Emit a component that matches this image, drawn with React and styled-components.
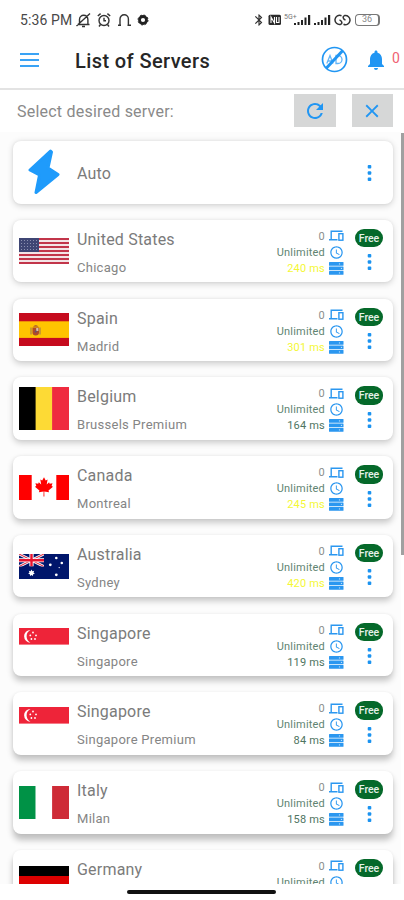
import React from 'react'
import styled, { createGlobalStyle } from 'styled-components'
import { MdAccessTime, MdRefresh, MdClose, MdNotifications, MdBluetooth } from 'react-icons/md'


const servers = [
    { id: 1, flag: 'us', country: 'United States', city: 'Chicago', ping: 240 },
    { id: 2, flag: 'es', country: 'Spain', city: 'Madrid', ping: 301 },
    { id: 3, flag: 'be', country: 'Belgium', city: 'Brussels Premium', ping: 164 },
    { id: 4, flag: 'ca', country: 'Canada', city: 'Montreal', ping: 245 },
    { id: 5, flag: 'au', country: 'Australia', city: 'Sydney', ping: 420 },
    { id: 6, flag: 'sg', country: 'Singapore', city: 'Singapore', ping: 119 },
    { id: 7, flag: 'sg', country: 'Singapore', city: 'Singapore Premium', ping: 84 },
    { id: 8, flag: 'it', country: 'Italy', city: 'Milan', ping: 158 },
    { id: 9, flag: 'de', country: 'Germany' },
]

const UsFlag = () => (
    <svg width="50" height="26" viewBox="0 0 50 26">
        <rect width="50" height="26" fill="#f3e4e6" />
        {[0, 2, 4, 6, 8, 10, 12].map((i) => (
            <rect key={i} y={i * 2} width="50" height="2" fill="#c2354a" />
        ))}
        <rect width="20" height="14" fill="#3f4674" />
        {[2, 5, 8, 11].map((y) => (
            <path key={y} d={`M2 ${y + 0.5}h17`} stroke="#8c90b0" strokeWidth="1" strokeDasharray="1 2" />
        ))}
    </svg>
)

const SpainFlag = () => (
    <svg width="50" height="33" viewBox="0 0 50 33">
        <rect width="50" height="33" fill="#c60b1e" />
        <rect y="8.3" width="50" height="16.6" fill="#ffc400" />
        <path d="M12 14.5v7M21 14.5v7" stroke="#a8804a" strokeWidth="1.2" />
        <path d="M13.5 14.5h6.5v5a3.2 3 0 0 1-6.5 0z" fill="#ad4a2c" />
        <path d="M14 13.8q2.7-3.5 5.6 0z" fill="#b5652b" />
        <path d="M17.2 15h2.2v3h-2.2z" fill="#d9c0a8" />
        <circle cx="16.8" cy="18.5" r="1" fill="#5d5577" />
    </svg>
)

const BelgiumFlag = () => (
    <svg width="50" height="43" viewBox="0 0 50 43">
        <rect width="17" height="43" fill="#000" />
        <rect x="16.6" width="17" height="43" fill="#fdda35" />
        <rect x="33.1" width="16.9" height="43" fill="#ef2b3f" />
    </svg>
)

const CanadaFlag = () => (
    <svg width="50" height="25" viewBox="0 0 50 25">
        <rect width="50" height="25" fill="#fff" />
        <rect width="12.7" height="25" fill="#f00" />
        <rect x="37.3" width="12.7" height="25" fill="#f00" />
        <path
            d="M25 2.3l-1.8 3.3-1.9-1 .9 5-2.4-2.3-.6 1.4-2.8-.5.9 2.8-1.4.8 4.5 3.8-.5 1.7 4.7-.7-.1 5h.9l-.1-5 4.7.7-.5-1.7 4.5-3.8-1.4-.8.9-2.8-2.8.5-.6-1.4-2.4 2.3.9-5-1.9 1z"
            fill="#f00"
        />
    </svg>
)

const AustraliaFlag = () => (
    <svg width="50" height="25" viewBox="0 0 50 25">
        <rect width="50" height="25" fill="#00166b" />
        <svg width="25" height="12.5" viewBox="0 0 25 12.5">
            <path d="M0 0l25 12.5M25 0L0 12.5" stroke="#fff" strokeWidth="2.8" />
            <path d="M0 0l25 12.5M25 0L0 12.5" stroke="#e0263e" strokeWidth="1.1" />
            <path d="M12.5 0v12.5M0 6.25h25" stroke="#fff" strokeWidth="4.2" />
            <path d="M12.5 0v12.5M0 6.25h25" stroke="#e8112d" strokeWidth="2.4" />
        </svg>
        <g fill="#fff">
            <path d="M12.5 15.6l.9 1.6 1.8-.4-.7 1.7 1.3 1.2-1.7.6-.1 1.8-1.5-1-1.5 1-.1-1.8-1.7-.6 1.3-1.2-.7-1.7 1.8.4z" />
            <circle cx="37.3" cy="4" r="1.3" />
            <circle cx="31.3" cy="10.8" r="1.4" />
            <circle cx="42.8" cy="9" r="1.3" />
            <circle cx="40.2" cy="13.6" r=".7" />
            <circle cx="37.3" cy="20.8" r="1.4" />
        </g>
    </svg>
)

// sits in the upper half of its box
const SingaporeFlag = () => (
    <svg width="50" height="33" viewBox="0 0 50 33">
        <rect width="50" height="16.6" fill="#ee2439" />
        <path d="M11.5 1.9a6.4 6.4 0 1 0 0 12.8a7.2 7.2 0 0 1 0-12.8z" fill="#fff" />
        <g fill="#fff">
            <circle cx="14" cy="4.5" r=".9" />
            <circle cx="11.3" cy="7.4" r=".9" />
            <circle cx="17" cy="7.4" r=".9" />
            <circle cx="12.4" cy="11" r=".9" />
            <circle cx="16" cy="11" r=".9" />
        </g>
    </svg>
)

const ItalyFlag = () => (
    <svg width="50" height="33" viewBox="0 0 50 33">
        <rect width="16.7" height="33" fill="#009246" />
        <rect x="16.7" width="16.7" height="33" fill="#fff" />
        <rect x="33.1" width="16.9" height="33" fill="#ce2b37" />
    </svg>
)

const GermanyFlag = () => (
    <svg width="50" height="30" viewBox="0 0 50 30">
        <rect width="50" height="10" fill="#000" />
        <rect y="10" width="50" height="10" fill="#d00" />
        <rect y="20" width="50" height="10" fill="#ffce00" />
    </svg>
)

const flags = {
    us: UsFlag,
    es: SpainFlag,
    be: BelgiumFlag,
    ca: CanadaFlag,
    au: AustraliaFlag,
    sg: SingaporeFlag,
    it: ItalyFlag,
    de: GermanyFlag,
}

const Bolt = () => (
    <svg width="32" height="46" viewBox="0 0 32 46">
        <path
            d="M22.500 2L2 21l9.500 5L8 43.500 30 25.500l-10-6.500L23.500 3z"
            fill="#1f9bfb"
            stroke="#1f9bfb"
            strokeWidth="3"
            strokeLinejoin="round"
        />
    </svg>
)

const Devices = () => (
    <svg width="15" height="12" viewBox="0 0 15 12" fill="none" stroke="#2b97f0" strokeWidth="1.400">
        <path d="M13.500 1.200H2.200V9M0 9.700h8.500" />
        <rect x="9.900" y="3.700" width="4" height="6.500" />
    </svg>
)

const Storage = () => (
    <svg width="15" height="13" viewBox="0 0 15 13">
        <g fill="#2b97f0">
            <rect width="14.500" height="3.700" rx=".5" />
            <rect y="4.500" width="14.500" height="3.700" rx=".5" />
            <rect y="9" width="14.500" height="3.700" rx=".5" />
        </g>
        <g fill="#b9dcfb">
            <circle cx="10.500" cy="1.900" r=".7" />
            <circle cx="12.500" cy="6.400" r=".7" />
            <circle cx="10.500" cy="10.900" r=".7" />
        </g>
    </svg>
)

const Dots = () => (
    <svg width="5" height="18" viewBox="0 0 5 18">
        <g fill="#1b93f0">
            <rect x=".7" y="1" width="3.600" height="3.600" rx="1" />
            <rect x=".7" y="7.200" width="3.600" height="3.600" rx="1" />
            <rect x=".7" y="13.400" width="3.600" height="3.600" rx="1" />
        </g>
    </svg>
)

const StatusLeftIcons = () => (
    <svg width="76" height="16" viewBox="0 0 76 16" fill="none" stroke="#333" strokeWidth="1.400">
        {/* muted bell */}
        <path d="M2.500 12.500h12M4.500 12V7.500a4.200 4.200 0 0 1 8.400 0V12M7 14.500h3M1.500 14L15 1.500" />
        {/* alarm */}
        <circle cx="29" cy="8.500" r="5" />
        <path d="M29 5.800v3h2M22.800 4l2.800-2.400M35.200 4l-2.800-2.400M25.500 12.500l-1.500 2M32.500 12.500l1.500 2" />
        {/* headset */}
        <path d="M43 13.200h3M45 13V7a4.200 4.200 0 0 1 8.400 0v6M52.500 13.200h3.500" />
        {/* gear */}
        <circle cx="68" cy="8" r="3.500" stroke="#222" strokeWidth="2.800" />
        <circle cx="68" cy="8" r="5" stroke="#222" strokeWidth="1" strokeDasharray="2 1.930" />
    </svg>
)

const Signal = () => (
    <svg width="19" height="12" viewBox="0 0 19 12" fill="#222">
        <rect x="1" y="9" width="2" height="2" />
        <rect x="4.500" y="8" width="2" height="3" />
        <rect x="8" y="6" width="2" height="5" />
        <rect x="11.500" y="3.500" width="2" height="7.500" />
        <rect x="15" y="1" width="2.200" height="10" />
    </svg>
)

const StatusRightIcons = () => (
    <>
        <svg width="14" height="12" viewBox="0 0 14 12">
            <rect x=".5" y=".8" width="12.500" height="10.200" rx="1.500" fill="#2b2b2b" />
            <path d="M3 9V3l3.500 6V3M8.500 3v5.500h2.500V3" stroke="#fff" strokeWidth="1.100" fill="none" />
        </svg>
        <Network>5G+</Network>
        <Signal />
        <Signal />
        <svg width="17" height="12" viewBox="0 0 17 12" fill="none" stroke="#333" strokeWidth="1.500">
            <path d="M7.500 1.700a4.600 4.600 0 1 0-1 8.700C9 9.500 7.500 6.500 5.500 6M9.500 10.300a4.600 4.600 0 1 0 1-8.700C8 2.500 9.500 5.500 11.500 6" />
        </svg>
        <Battery>36</Battery>
    </>
)

const NoAds = () => (
    <svg width="27" height="27" viewBox="0 0 27 27" fill="none" stroke="#2196f3" strokeWidth="1.700">
        <circle cx="13.500" cy="13.500" r="12" />
        <path d="M5.800 17.500l3.200-8 3 8M7 15h4M15 9.500v8h2a4 4 0 0 0 0-8z" strokeWidth="1.300" stroke="#63b5f7" />
        <path d="M21.800 4.500L5 22.500" strokeWidth="3" />
    </svg>
)

const ServerCard = ({ server, depth }) => {
    const Flag = flags[server.flag]

    return (
        <Card $depth={depth}>
            <Picture>
                <Flag />
            </Picture>
            <Names>
                <Country>{server.country}</Country>
                <City>{server.city}</City>
            </Names>
            <Stats>
                <Stat $color="#8b8f8d">0 <Devices /></Stat>
                <Stat $color="#5f8472">Unlimited <MdAccessTime size={15} /></Stat>
                {server.ping && (
                    <Stat $color={server.ping >= 200 ? '#f4f736' : '#4f7562'}>
                        {server.ping} ms <Storage />
                    </Stat>
                )}
            </Stats>
            <Actions>
                <Badge>Free</Badge>
                <Dots />
            </Actions>
        </Card>
    )
}

const App = () => {
    return (
        <Screen>
            <GlobalStyle />
            <StatusBar>
                <Time>5:36 PM</Time>
                <StatusLeftIcons />
                <StatusRight>
                    <MdBluetooth size={14} />
                    <StatusRightIcons />
                </StatusRight>
            </StatusBar>
            <Header>
                <MenuButton>
                    <span />
                    <span />
                    <span />
                </MenuButton>
                <h1>List of Servers</h1>
                <HeaderIcons>
                    <NoAds />
                    <MdNotifications size={24} />
                    <Count>0</Count>
                </HeaderIcons>
            </Header>
            <Toolbar>
                <p>Select desired server:</p>
                <ToolButton><MdRefresh size={24} /></ToolButton>
                <ToolButton><MdClose size={22} /></ToolButton>
            </Toolbar>
            <Body>
                <List>
                    <Card $depth={0}>
                        <Picture>
                            <Bolt />
                        </Picture>
                        <Names $single>
                            <Country>Auto</Country>
                        </Names>
                        <Actions $center>
                            <Dots />
                        </Actions>
                    </Card>
                    {servers.map((server, i) => (
                        <ServerCard key={server.id} server={server} depth={i + 1} />
                    ))}
                </List>
                <ScrollTrack>
                    <ScrollThumb />
                </ScrollTrack>
            </Body>
            <NavBar>
                <Handle />
            </NavBar>
        </Screen>
    )
}

const GlobalStyle = createGlobalStyle`
    * {
        box-sizing: border-box;
        margin: 0;
        padding: 0;
    }
    body {
        background: #fff;
        font-family: Roboto, "Liberation Sans", sans-serif;
    }
    svg {
        display: block;
        flex-shrink: 0;
    }
`;

const Screen = styled.div`
    width: 404px;
    height: 900px;
    display: flex;
    flex-direction: column;
    overflow: hidden;
    background: #fff;
`;

const StatusBar = styled.div`
    height: 40px;
    display: flex;
    align-items: center;
    padding: 0 24px 0 20px;
    color: #333;
`;

const Time = styled.span`
    width: 55px;
    font-size: 14px;
    white-space: nowrap;
    letter-spacing: 0.1px;
    color: #484848;
`;

const StatusRight = styled.div`
    display: flex;
    align-items: center;
    margin-left: auto;
    gap: 1.500px;
`;

const Network = styled.span`
    width: 13px;
    align-self: flex-start;
    font-size: 7px;
    line-height: 8px;
    color: #777;
    margin-right: -6px;
    margin-left: 1px;
`;

const Battery = styled.span`
    width: 25px;
    height: 12px;
    border: 1.5px solid #777;
    border-right-width: 2.5px;
    border-radius: 4px;
    margin-left: 3px;
    font-size: 9px;
    line-height: 9px;
    text-align: center;
    color: #888;
`;

const Header = styled.header`
    height: 50px;
    display: flex;
    align-items: center;
    padding: 0 4px 9px 20px;
    border-bottom: 2px solid #e3e3e3;

    h1 {
        margin-left: 36px;
        padding-top: 2px;
        font-size: 20px;
        font-weight: 500;
        letter-spacing: 0.4px;
        color: #262626;
    }
`;

const MenuButton = styled.button`
    width: 19px;
    display: flex;
    flex-direction: column;
    gap: 4px;
    border: 0;
    background: none;

    span {
        height: 2px;
        background: #3aa3f5;
    }
`;

const HeaderIcons = styled.div`
    display: flex;
    align-items: center;
    margin-left: auto;
    color: #2196f3;

    svg + svg {
        margin-left: 16px;
    }
`;

const Count = styled.span`
    width: 8px;
    margin: -4px 0 0 4px;
    font-size: 14px;
    line-height: 18px;
    color: #f06272;
`;

const Toolbar = styled.div`
    height: 42px;
    display: flex;
    align-items: center;
    padding: 0 11px 0 17px;

    p {
        flex: 1;
        font-size: 16px;
        letter-spacing: 0.22px;
        color: #8a8a8a;
        padding-top: 1px;
    }
`;

const ToolButton = styled.button`
    width: 41.500px;
    height: 33px;
    display: flex;
    align-items: center;
    justify-content: center;
    margin-left: 16px;
    margin-bottom: 1px;
    border: 0;
    background: #d6d7d7;
    color: #2196f3;
`;

const Body = styled.div`
    flex: none;
    height: 752px;
    display: flex;
    overflow: hidden;
`;

const List = styled.div`
    flex: 1;
    display: flex;
    flex-direction: column;
    gap: 16.25px;
    padding: 9px 7.500px 0 13px;
    background: #fcfcfc;
`;

const Card = styled.div`
    flex: none;
    height: 62.500px;
    display: flex;
    padding-left: 6px;
    border-radius: 8px;
    background: #fff;
    box-shadow: 0 ${(props) => 1.5 + props.$depth * 0.5}px 6px rgba(0, 0, 0, ${(props) => 0.16 + props.$depth * 0.01}),
        0 0 3px rgba(0, 0, 0, 0.05);
`;

const Picture = styled.div`
    width: 50px;
    display: flex;
    align-items: center;
    justify-content: center;
`;

const Names = styled.div`
    flex: 1;
    display: flex;
    flex-direction: column;
    justify-content: ${(props) => (props.$single ? 'center' : 'flex-start')};
    gap: 11px;
    padding-left: 8px;
    padding-top: ${(props) => (props.$single ? '3px' : '10px')};
`;

const Country = styled.div`
    font-size: 16px;
    line-height: 19px;
    letter-spacing: 0.2px;
    color: #7b7b7b;
`;

const City = styled.div`
    font-size: 13px;
    line-height: 15px;
    letter-spacing: 0.28px;
    color: #858585;
`;

const Stats = styled.div`
    display: flex;
    flex-direction: column;
    padding-top: 8.500px;
`;

const Stat = styled.div`
    height: 16px;
    display: flex;
    align-items: center;
    justify-content: flex-end;
    font-size: 11px;
    letter-spacing: 0.2px;
    color: ${(props) => props.$color};

    svg {
        margin-left: 4px;
        color: #2b97f0;
    }
`;

const Actions = styled.div`
    width: 49px;
    display: flex;
    flex-direction: column;
    align-items: center;
    justify-content: ${(props) => (props.$center ? 'center' : 'flex-start')};
    gap: 6px;
    padding-left: 1px;
    padding-top: ${(props) => (props.$center ? '1px' : '9px')};
`;

const Badge = styled.span`
    width: 28.500px;
    height: 18.500px;
    border-radius: 9px;
    background: #05692a;
    color: #e6f2e9;
    font-size: 10.500px;
    font-weight: 500;
    line-height: 20px;
    text-align: center;
`;

const ScrollTrack = styled.div`
    width: 3.500px;
`;

const ScrollThumb = styled.div`
    height: 421.500px;
    margin-top: 1px;
    background: #a0a0a0;
`;

const NavBar = styled.div`
    flex: 1;
    display: flex;
    justify-content: center;
    padding: 6px 2px 0 0;
    background: #fff;
`;

const Handle = styled.div`
    width: 149px;
    height: 4px;
    border-radius: 2px;
    background: #111;
`;

export default App
